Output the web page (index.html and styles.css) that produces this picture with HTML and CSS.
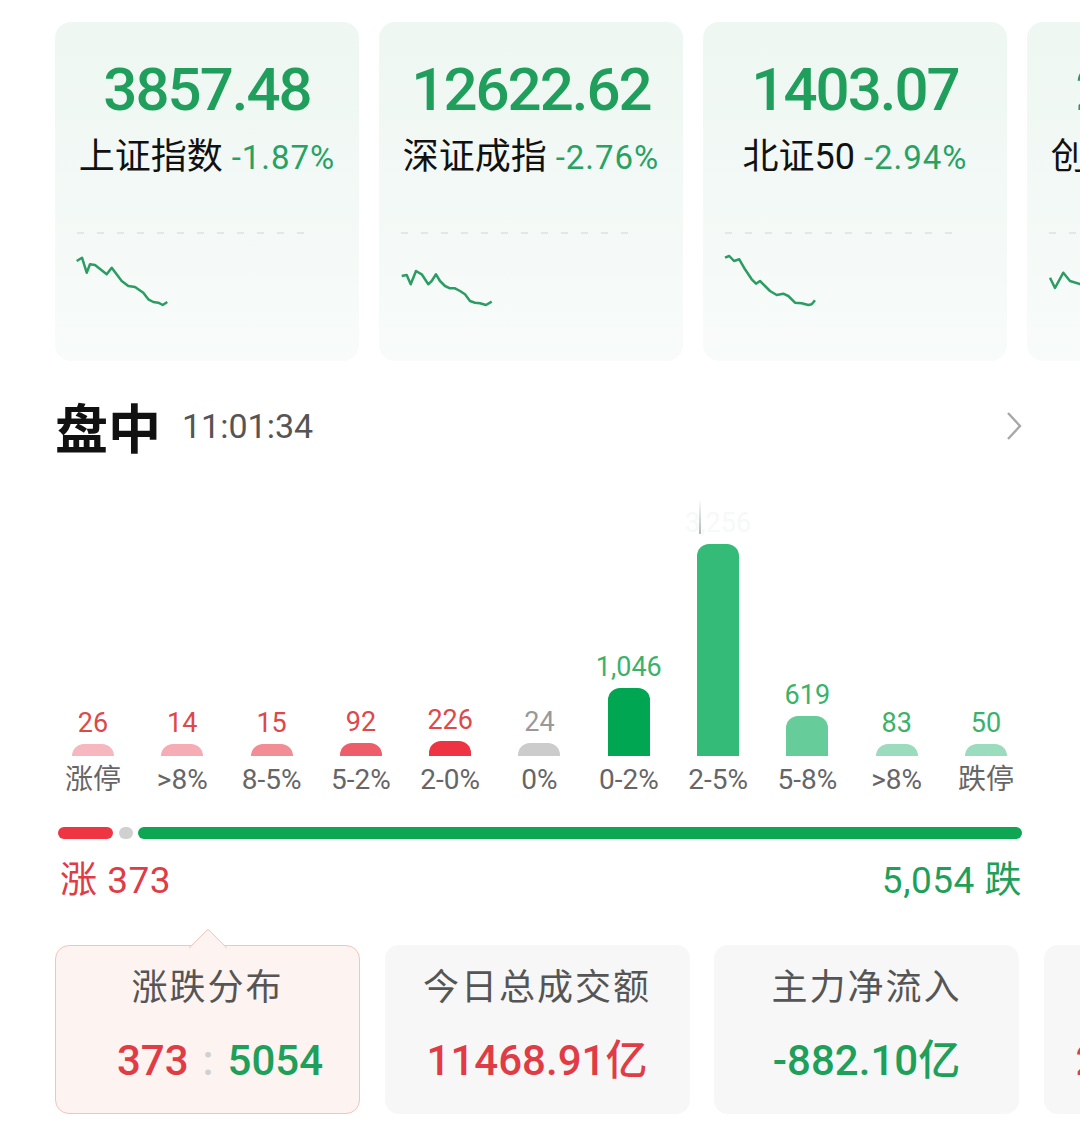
FILE: index.html
```html
<!DOCTYPE html>
<html>
<head>
    <title>盘中行情</title>
    <meta charset="UTF-8">
    <link rel="stylesheet" href="styles.css">
</head>

<body>
<div class="page">
    <!-- index cards, the last one runs off the screen -->
    <div class="index-row">
        <div class="index-card">
            <div class="index-value">3857.48</div>
            <div class="index-name">上证指数 <span class="index-change">-1.87%</span></div>
            <svg class="spark" width="304" height="140" viewBox="0 0 304 140">
                <line class="spark-base" x1="22" y1="40" x2="252" y2="40"/>
                <polyline class="spark-line" points="21.7,68 27,64.7 31.7,79.7 35,71.3 40,72 51.7,81.3 56.7,74.7 66.7,88 73.3,93 80,94 88.3,99.7 93.3,106.3 98.3,109 103.3,109.7 107.7,112 112.3,109"/>
            </svg>
        </div>
        <div class="index-card">
            <div class="index-value">12622.62</div>
            <div class="index-name">深证成指 <span class="index-change">-2.76%</span></div>
            <svg class="spark" width="304" height="140" viewBox="0 0 304 140">
                <line class="spark-base" x1="22" y1="40" x2="252" y2="40"/>
                <polyline class="spark-line" points="22.7,83 27.7,82 31.7,91.3 37,78 42.7,81.3 49.3,91.3 52.7,88 57,81.3 61,88 66,93 71,95.3 76,95.3 81,98 86,101.3 91,108 96,109.7 101,110.3 107,112 112.7,108.7"/>
            </svg>
        </div>
        <div class="index-card">
            <div class="index-value">1403.07</div>
            <div class="index-name">北证50 <span class="index-change">-2.94%</span></div>
            <svg class="spark" width="304" height="140" viewBox="0 0 304 140">
                <line class="spark-base" x1="22" y1="40" x2="252" y2="40"/>
                <polyline class="spark-line" points="22,64.7 26.3,63 31,68 36.3,66.3 42,76.3 48.7,86.3 53,90.7 57,88 62,93 67,98 73.7,102 80.3,100.7 85.3,103 92,109.7 98.7,110.3 105.3,112 108.7,111.3 112,107.3"/>
            </svg>
        </div>
        <div class="index-card">
            <div class="index-value">2615.39</div>
            <div class="index-name">创业板指 <span class="index-change">-3.12%</span></div>
            <svg class="spark" width="304" height="140" viewBox="0 0 304 140">
                <line class="spark-base" x1="22" y1="40" x2="252" y2="40"/>
                <polyline class="spark-line" points="23,84.7 28,95 36.3,79.7 43,88 53,91 63,98 73,101 85,106 98,110 112,108"/>
            </svg>
        </div>
    </div>

    <div class="main">
        <div class="section-head">
            <span class="section-title">盘中</span>
            <span class="section-time">11:01:34</span>
            <svg class="chevron" width="16" height="30" viewBox="0 0 16 30">
                <polyline points="2,2 14,15 2,28"/>
            </svg>
        </div>

        <!-- rise / fall distribution -->
        <div class="dist">
            <div class="dist-col">
                <div class="dist-num num-up">26</div>
                <div class="dist-bar bar-up1" style="height:12px"></div>
                <div class="dist-label">涨停</div>
            </div>
            <div class="dist-col">
                <div class="dist-num num-up">14</div>
                <div class="dist-bar bar-up2" style="height:12px"></div>
                <div class="dist-label">&gt;8%</div>
            </div>
            <div class="dist-col">
                <div class="dist-num num-up">15</div>
                <div class="dist-bar bar-up3" style="height:12px"></div>
                <div class="dist-label">8-5%</div>
            </div>
            <div class="dist-col">
                <div class="dist-num num-up">92</div>
                <div class="dist-bar bar-up4" style="height:13px"></div>
                <div class="dist-label">5-2%</div>
            </div>
            <div class="dist-col">
                <div class="dist-num num-up">226</div>
                <div class="dist-bar bar-up5" style="height:15px"></div>
                <div class="dist-label">2-0%</div>
            </div>
            <div class="dist-col">
                <div class="dist-num num-flat">24</div>
                <div class="dist-bar bar-flat" style="height:13px"></div>
                <div class="dist-label">0%</div>
            </div>
            <div class="dist-col">
                <div class="dist-num num-down">1,046</div>
                <div class="dist-bar bar-down1" style="height:68px"></div>
                <div class="dist-label">0-2%</div>
            </div>
            <div class="dist-col dist-col-top">
                <span class="faint-line"></span>
                <div class="dist-num num-faint">3,256</div>
                <div class="dist-bar bar-down2" style="height:212px"></div>
                <div class="dist-label">2-5%</div>
            </div>
            <div class="dist-col">
                <div class="dist-num num-down">619</div>
                <div class="dist-bar bar-down3" style="height:40px"></div>
                <div class="dist-label">5-8%</div>
            </div>
            <div class="dist-col">
                <div class="dist-num num-down">83</div>
                <div class="dist-bar bar-down4" style="height:12px"></div>
                <div class="dist-label">&gt;8%</div>
            </div>
            <div class="dist-col">
                <div class="dist-num num-down">50</div>
                <div class="dist-bar bar-down4" style="height:12px"></div>
                <div class="dist-label">跌停</div>
            </div>
        </div>

        <div class="ratio">
            <span class="ratio-up"></span>
            <span class="ratio-flat"></span>
            <span class="ratio-down"></span>
        </div>

        <div class="totals">
            <span class="red">涨 373</span>
            <span class="green">5,054 跌</span>
        </div>
    </div>

    <div class="stat-row">
        <div class="stat-card active">
            <div class="stat-title">涨跌分布</div>
            <div class="stat-value stat-ratio"><span class="red">373</span><span class="stat-sep">:</span><span class="green">5054</span></div>
        </div>
        <div class="stat-card">
            <div class="stat-title">今日总成交额</div>
            <div class="stat-value red">11468.91亿</div>
        </div>
        <div class="stat-card">
            <div class="stat-title">主力净流入</div>
            <div class="stat-value green">-882.10亿</div>
        </div>
        <div class="stat-card">
            <div class="stat-title">涨停板封板率</div>
            <div class="stat-value red">26家 / 61.9%</div>
        </div>
    </div>
</div>
</body>
</html>
```

FILE: styles.css
```css
body {
    margin: 0;
    background-color: #fff;
    font-family: Roboto, "Noto Sans CJK SC", sans-serif;
    overflow: hidden;
}

.page {
    width: 1080px;
    overflow: hidden;
}

.red {
    color: #e03c46;
}

.green {
    color: #1e9f5a;
}

/* index cards */
.index-row {
    display: flex;
    gap: 20px;
    padding: 22px 0 0 55px;
}

.index-card {
    flex: 0 0 304px;
    height: 339px;
    box-sizing: border-box;
    padding-top: 38px;
    border-radius: 16px;
    background: linear-gradient(#eef7f2, #f8fbfa);
    text-align: center;
}

.index-value {
    font-size: 60px;
    line-height: 60px;
    font-weight: 500;
    letter-spacing: -2px;
    color: #1f9f5b;
}

.index-name {
    margin-top: 17px;
    font-size: 36px;
    line-height: 40px;
    color: #111;
    white-space: nowrap;
}

.index-change {
    font-size: 33px;
    letter-spacing: 1px;
    color: #28a263;
}

.spark {
    display: block;
    margin-top: 15px;
}

.spark-base {
    stroke: #dfdfdf;
    stroke-width: 1.5;
    stroke-dasharray: 7 13;
}

.spark-line {
    fill: none;
    stroke: #2c9d62;
    stroke-width: 2.5;
    stroke-linejoin: round;
}

/* intraday section */
.main {
    margin: 0 58px 0 55px;
}

.section-head {
    display: flex;
    align-items: center;
    height: 60px;
    margin-top: 35px;
}

.section-title {
    font-size: 53px;
    font-weight: 700;
    color: #111;
}

.section-time {
    margin-left: 21px;
    font-size: 34px;
    color: #555;
}

.chevron {
    margin-left: auto;
}

.chevron polyline {
    fill: none;
    stroke: #a8a8a8;
    stroke-width: 2.4;
}

.dist {
    display: flex;
    justify-content: space-between;
    align-items: flex-end;
    height: 341px;
    padding-left: 2px;
}

.dist-col {
    width: 72px;
    display: flex;
    flex-direction: column;
    align-items: center;
}

.dist-col-top {
    position: relative;
}

.faint-line {
    position: absolute;
    left: 17px;
    top: -9px;
    width: 2px;
    height: 35px;
    background: linear-gradient(rgba(150, 170, 160, 0), rgba(120, 140, 130, 0.6));
}

.dist-num {
    font-size: 27px;
    line-height: 30px;
    margin-bottom: 6px;
    white-space: nowrap;
}

.num-up {
    color: #de4848;
}

.num-flat {
    color: #999;
}

.num-down {
    color: #3bb26a;
}

.num-faint {
    color: #f6f9f7;
}

.dist-bar {
    width: 42px;
    border-radius: 12px 12px 0 0;
}

.bar-up1 { background-color: #f7b7be; }
.bar-up2 { background-color: #f6acb4; }
.bar-up3 { background-color: #f28c95; }
.bar-up4 { background-color: #ee5e6a; }
.bar-up5 { background-color: #ee3442; }
.bar-flat { background-color: #cccccc; }
.bar-down1 { background-color: #00a651; }
.bar-down2 { background-color: #35bb78; }
.bar-down3 { background-color: #66cc9a; }
.bar-down4 { background-color: #9adcbd; }

.dist-label {
    margin-top: 7px;
    font-size: 28px;
    line-height: 34px;
    color: #666;
    white-space: nowrap;
}

.ratio {
    display: flex;
    gap: 5.5px;
    height: 12px;
    margin-top: 30px;
    padding-left: 3px;
}

.ratio-up {
    width: 55px;
    border-radius: 6px;
    background-color: #ee3642;
}

.ratio-flat {
    width: 14px;
    border-radius: 6px;
    background-color: #d0d0d0;
}

.ratio-down {
    flex: 1;
    border-radius: 6px;
    background-color: #0ea652;
}

.totals {
    display: flex;
    justify-content: space-between;
    margin-top: 22px;
    padding-left: 5px;
    font-size: 37px;
    line-height: 40px;
    letter-spacing: 0.5px;
}

/* summary cards */
.stat-row {
    display: flex;
    gap: 24.5px;
    padding-left: 55px;
    margin-top: 44px;
}

.stat-card {
    flex: 0 0 305px;
    height: 169px;
    box-sizing: border-box;
    padding-top: 21px;
    border-radius: 14px;
    background-color: #f7f7f7;
    text-align: center;
    position: relative;
    white-space: nowrap;
}

.stat-card.active {
    padding-top: 19.5px;
    border: 1.5px solid #f3c4bb;
    background-color: #fdf3f1;
}

/* little pointer on the selected card */
.stat-card.active::before {
    content: "";
    position: absolute;
    top: -12px;
    left: calc(50% - 14px);
    width: 28px;
    height: 28px;
    box-sizing: border-box;
    border-top: 1.5px solid #f3c4bb;
    border-left: 1.5px solid #f3c4bb;
    border-top-left-radius: 3px;
    background-color: #fdf3f1;
    transform: rotate(45deg);
}

.stat-title {
    position: relative;
    font-size: 36px;
    line-height: 44px;
    letter-spacing: 2px;
    color: #555;
}

.stat-value {
    margin-top: 26px;
    font-size: 42px;
    line-height: 50px;
    font-weight: 500;
}

.stat-ratio {
    padding-left: 25px;
}

.stat-sep {
    margin: 0 14px;
    color: #d0d0d0;
}
```
